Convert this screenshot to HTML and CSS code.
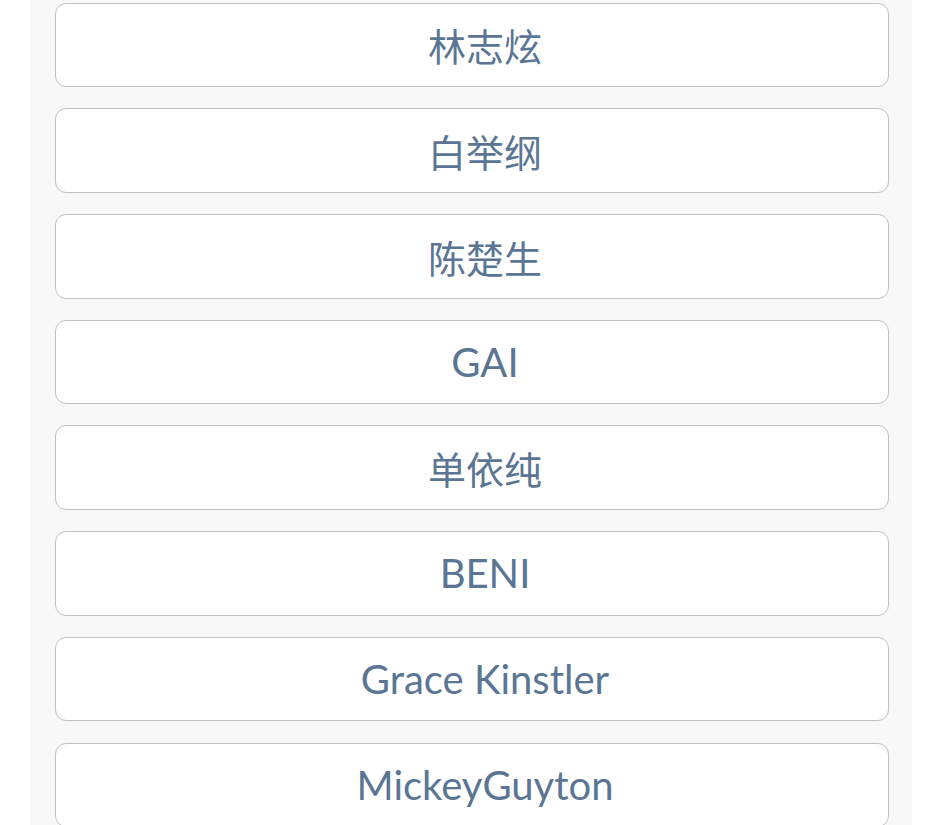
FILE: index.html
```html
<!DOCTYPE html>
<html lang="zh-CN">
<head>
<meta charset="utf-8">
<title>Artists</title>
<link rel="stylesheet" href="styles.css">
</head>
<body>
<div class="panel">
  <ul class="list">
    <li class="item">林志炫</li>
    <li class="item">白举纲</li>
    <li class="item">陈楚生</li>
    <li class="item latin">GAI</li>
    <li class="item">单依纯</li>
    <li class="item latin">BENI</li>
    <li class="item latin">Grace Kinstler</li>
    <li class="item latin">MickeyGuyton</li>
  </ul>
</div>
</body>
</html>
```

FILE: styles.css
```css
html, body {
  margin: 0;
  padding: 0;
  background: #ffffff;
  height: 825px;
  overflow: hidden;
}

.panel {
  margin-left: 30px;
  width: 882px;
  height: 825px;
  background: #f8f8f8;
  box-sizing: border-box;
  padding: 2.7px 23px 0 25px;
}

.list {
  list-style: none;
  margin: 0;
  padding: 0;
  display: flex;
  flex-direction: column;
  gap: 21.1px;
}

.item {
  box-sizing: border-box;
  height: 84.6px;
  padding-left: 26px;
  background: #ffffff;
  border: 1.5px solid #c0c0c0;
  border-radius: 11px;
  display: flex;
  align-items: center;
  justify-content: center;
  font-family: "Lato", "Noto Sans CJK SC", sans-serif;
  font-size: 38px;
  color: #5b7594;
}

.latin {
  font-size: 40px;
}
```
